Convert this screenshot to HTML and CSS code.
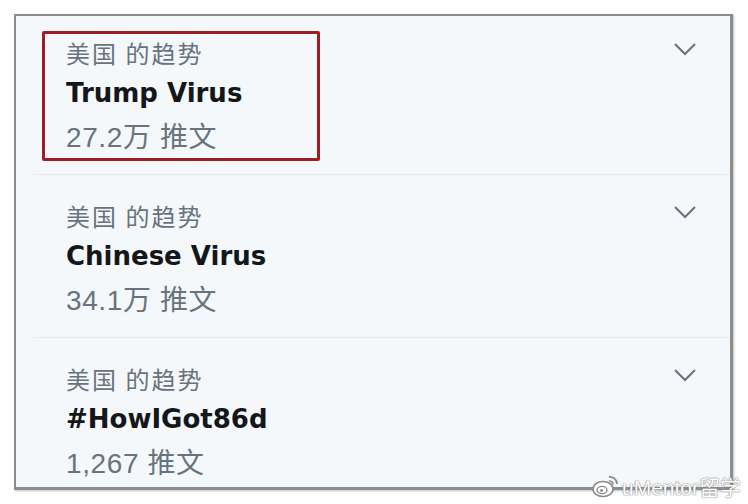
FILE: index.html
```html
<!DOCTYPE html>
<html lang="zh-CN">
  <head>
    <meta charset="UTF-8" />
    <meta name="viewport" content="width=device-width, initial-scale=1.0" />
    <title>趋势</title>
    <link rel="stylesheet" href="styles.css">
  </head>
  <body>
    <div class="frame">
      <div class="trend first">
        <div class="trend-text">
          <div class="label">美国 的趋势</div>
          <div class="title">Trump Virus</div>
          <div class="count">27.2万 推文</div>
        </div>
        <svg class="chevron" width="22" height="13" viewBox="0 0 22 13">
          <path d="M1 1 L11 11 L21 1" fill="none" stroke="#68737d" stroke-width="2" />
        </svg>
      </div>
      <div class="trend">
        <div class="trend-text">
          <div class="label">美国 的趋势</div>
          <div class="title">Chinese Virus</div>
          <div class="count">34.1万 推文</div>
        </div>
        <svg class="chevron" width="22" height="13" viewBox="0 0 22 13">
          <path d="M1 1 L11 11 L21 1" fill="none" stroke="#68737d" stroke-width="2" />
        </svg>
      </div>
      <div class="trend last">
        <div class="trend-text">
          <div class="label">美国 的趋势</div>
          <div class="title">#HowIGot86d</div>
          <div class="count">1,267 推文</div>
        </div>
        <svg class="chevron" width="22" height="13" viewBox="0 0 22 13">
          <path d="M1 1 L11 11 L21 1" fill="none" stroke="#68737d" stroke-width="2" />
        </svg>
      </div>
      <div class="highlight"></div>
    </div>

    <div class="watermark">
      <svg class="weibo" width="28" height="26" viewBox="0 0 28 26">
        <ellipse cx="11" cy="16" rx="10" ry="7.5" fill="#fff" stroke="#8a8a8a" stroke-width="1.6" />
        <ellipse cx="10" cy="17" rx="5" ry="3.6" fill="none" stroke="#8a8a8a" stroke-width="1.4" />
        <circle cx="9.5" cy="17.5" r="1.4" fill="#8a8a8a" />
        <path d="M17 4 A7 7 0 0 1 25 11" fill="none" stroke="#8a8a8a" stroke-width="1.8" />
        <path d="M17 8 A3.5 3.5 0 0 1 21 11.5" fill="none" stroke="#8a8a8a" stroke-width="1.6" />
      </svg>
      <span class="mark-text">uMentor留学</span>
    </div>
  </body>
</html>
```

FILE: styles.css
```css
* {
  margin: 0;
  padding: 0;
  box-sizing: border-box;
}

body {
  background: #fff;
  font-family: "Liberation Sans", "Noto Sans CJK SC", sans-serif;
  width: 748px;
  height: 504px;
  overflow: hidden;
  position: relative;
}

.frame {
  position: relative;
  margin: 14px 0 0 14px;
  width: 719px;
  height: 476px;
  background: #f5f8fa;
  border: 2px solid #8c8c8c;
  border-right-width: 3px;
  border-bottom-width: 3px;
  box-shadow: 1px 1px 2px rgba(0, 0, 0, 0.25);
  overflow: hidden;
}

.trend {
  display: flex;
  justify-content: space-between;
  align-items: flex-start;
  margin-left: 18px;
  padding: 26px 34px 18px 32px;
  border-bottom: 1px solid #e6ebef;
}

.trend.first {
  padding-top: 22px;
}

.trend.last {
  border-bottom: none;
}

.label {
  font-family: "Noto Sans CJK SC", sans-serif;
  font-size: 24px;
  line-height: 30px;
  letter-spacing: 2px;
  color: #68737d;
}

.title {
  font-family: "DejaVu Sans", "Liberation Sans", sans-serif;
  font-size: 26px;
  line-height: 40px;
  font-weight: bold;
  color: #14171a;
  margin-top: 5px;
}

.count {
  font-size: 28px;
  line-height: 36px;
  letter-spacing: 0.6px;
  color: #68737d;
  margin-top: 7px;
}

.chevron {
  margin-top: 5px;
}

.highlight {
  position: absolute;
  left: 26px;
  top: 15px;
  width: 278px;
  height: 130px;
  border: 3px solid #9e1b22;
  border-radius: 2px;
}

.watermark {
  position: absolute;
  left: 592px;
  top: 471px;
  display: flex;
  align-items: center;
  gap: 2px;
}

.mark-text {
  font-family: "Liberation Sans", "Noto Sans CJK SC", sans-serif;
  font-size: 21px;
  color: #fff;
  text-shadow: 0 0 1px #777, 0 0 2px #888;
}
```
